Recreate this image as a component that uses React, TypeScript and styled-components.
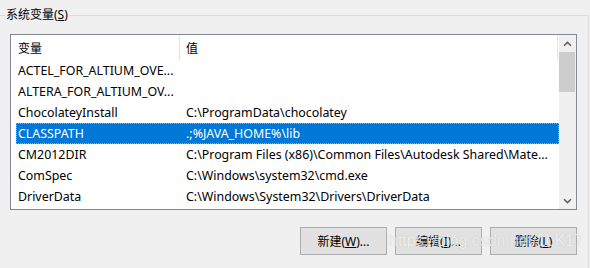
import React from "react";
import styled, { createGlobalStyle } from "styled-components";

const GlobalStyle = createGlobalStyle`
  html, body {
    margin: 0;
    padding: 0;
    background: #f0f0f0;
  }
`;

type Variable = { name: string; value: string };

const variables: Variable[] = [
  { name: "ACTEL_FOR_ALTIUM_OVE...", value: "" },
  { name: "ALTERA_FOR_ALTIUM_OV...", value: "" },
  { name: "ChocolateyInstall", value: "C:\\ProgramData\\chocolatey" },
  { name: "CLASSPATH", value: ".;%JAVA_HOME%\\lib" },
  { name: "CM2012DIR", value: "C:\\Program Files (x86)\\Common Files\\Autodesk Shared\\Mate..." },
  { name: "ComSpec", value: "C:\\Windows\\system32\\cmd.exe" },
  { name: "DriverData", value: "C:\\Windows\\System32\\Drivers\\DriverData" },
];

const Chevron = ({ down }: { down?: boolean }) => (
  <svg width="9" height="6" viewBox="0 0 9 6">
    <path
      d={down ? "M1 1.2 L4.5 4.6 L8 1.2" : "M1 4.8 L4.5 1.4 L8 4.8"}
      fill="none"
      stroke="#606060"
      strokeWidth="1.6"
    />
  </svg>
);

export default function App() {
  const selected = 3;
  return (
    <Window>
      <GlobalStyle />
      <Group>
        <Legend>
          系统变量(<u>S</u>)
        </Legend>
        <ListBox>
          <Table>
            <HeaderRow>
              <HeaderCell $width={169} $pad={7}>变量</HeaderCell>
              <HeaderCell $width={378} $pad={6}>值</HeaderCell>
            </HeaderRow>
            {variables.map((v, i) => (
              <Row key={v.name} $selected={i === selected}>
                <NameCell>{v.name}</NameCell>
                <ValueCell>{v.value}</ValueCell>
              </Row>
            ))}
          </Table>
          <ScrollBar>
            <ArrowButton>
              <Chevron />
            </ArrowButton>
            <Thumb />
            <Track />
            <ArrowButton>
              <Chevron down />
            </ArrowButton>
          </ScrollBar>
        </ListBox>
        <ButtonRow>
          <Button>
            新建(<u>W</u>)...
          </Button>
          <Button>
            编辑(<u>I</u>)...
          </Button>
          <Button>
            删除(<u>L</u>)
          </Button>
        </ButtonRow>
      </Group>
      <Watermark>https://blog.csdn.net/1LK17</Watermark>
    </Window>
  );
}

const Window = styled.div`
  position: relative;
  width: 590px;
  height: 268px;
  overflow: hidden;
  background: #f0f0f0;
  color: #000;
  font-family: "Segoe UI", "Noto Sans", "Noto Sans CJK SC", sans-serif;
  font-size: 12px;
`;

const Group = styled.div`
  position: relative;
  box-sizing: border-box;
  margin-top: 15px;
  width: 589px;
  height: 253px;
  padding: 18px 0 0 10px;
  border-top: 1px solid #dcdcdc;
  border-right: 1px solid #dcdcdc;
`;

const Legend = styled.span`
  position: absolute;
  top: -10px;
  left: 5px;
  padding: 0 1px;
  background: #f0f0f0;
  line-height: 18px;
`;

const ListBox = styled.div`
  box-sizing: border-box;
  display: flex;
  width: 567px;
  height: 176px;
  border: 1px solid #828790;
  background: #fff;
`;

const Table = styled.div`
  flex: 1;
  display: flex;
  flex-direction: column;
  overflow: hidden;
`;

const HeaderRow = styled.div`
  display: flex;
  height: 25px;
  flex-shrink: 0;
`;

const HeaderCell = styled.div<{ $width: number; $pad: number }>`
  box-sizing: border-box;
  display: flex;
  align-items: center;
  width: ${(p) => p.$width}px;
  padding-left: ${(p) => p.$pad}px;
  border-right: 1px solid #e5e5e5;
`;

const Row = styled.div<{ $selected?: boolean }>`
  display: flex;
  align-items: center;
  flex-shrink: 0;
  height: 21px;
  width: 543px;
  margin-left: 5px;
  white-space: nowrap;
  font-size: 12.4px;
  background: ${(p) => (p.$selected ? "#0078d7" : "transparent")};
  color: ${(p) => (p.$selected ? "#fff" : "#000")};
  outline: ${(p) => (p.$selected ? "1px dotted #f59a3c" : "none")};
  outline-offset: -1px;
`;

const NameCell = styled.span`
  box-sizing: border-box;
  width: 164px;
  padding-left: 2px;
  overflow: hidden;
`;

const ValueCell = styled.span`
  flex: 1;
  padding-left: 6px;
  overflow: hidden;
`;

const ScrollBar = styled.div`
  display: flex;
  flex-direction: column;
  width: 17px;
  background: #f0f0f0;
`;

const ArrowButton = styled.div`
  display: flex;
  align-items: center;
  justify-content: center;
  height: 17px;
`;

const Thumb = styled.div`
  height: 40px;
  margin: 0 1px 0 0;
  background: #cdcdcd;
`;

const Track = styled.div`
  flex: 1;
`;

const ButtonRow = styled.div`
  display: flex;
  justify-content: flex-end;
  gap: 8px;
  width: 567px;
  margin-top: 17px;
`;

const Button = styled.button`
  box-sizing: border-box;
  width: 87px;
  height: 28px;
  padding: 0;
  border: 1px solid #adadad;
  background: #e1e1e1;
  color: #000;
  font-family: inherit;
  font-size: 12px;
`;

const Watermark = styled.div`
  position: absolute;
  left: 389px;
  top: 232px;
  font-family: "Liberation Sans", sans-serif;
  font-size: 16px;
  color: rgba(255, 255, 255, 0.7);
  text-shadow: 0 0 1px rgba(120, 120, 120, 0.35);
  pointer-events: none;
`;
